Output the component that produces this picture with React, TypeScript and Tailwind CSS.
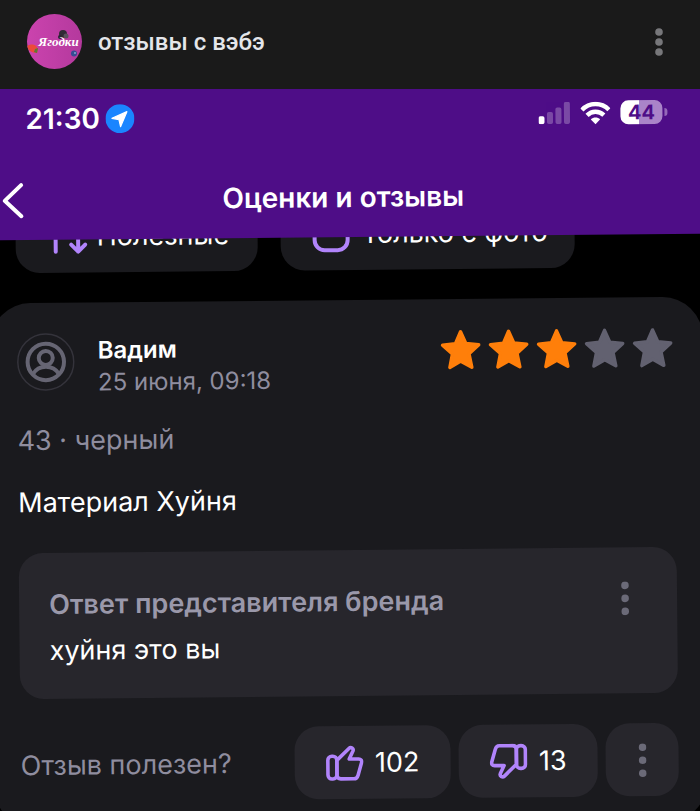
import type { ReactNode } from "react";

const RATING = 3;

export default function App() {
  return (
    <main className="flex h-screen flex-col overflow-hidden bg-black font-['Inter',sans-serif] text-white">
      <ChannelBar />
      <div className="min-h-0 flex-1 overflow-hidden">
        {/* the phone shot sits slightly tilted inside the post */}
        <div className="origin-top -rotate-[0.55deg]">
          <PhoneHeader />
          <Filters />
          <Review />
        </div>
      </div>
    </main>
  );
}

function ChannelBar() {
  return (
    <header className="relative z-20 flex h-[89px] shrink-0 items-center bg-[#1a1a1a] pb-1.5 pl-[27px] pr-[29px]">
      <ChannelLogo />
      <h1 className="ml-4 flex-1 font-['Roboto',sans-serif] text-2xl font-medium text-[#e4e6ea]">
        отзывы с вэбэ
      </h1>
      <button type="button" aria-label="Меню" className="px-2 text-[#77777a]">
        <Dots size="small" />
      </button>
    </header>
  );
}

function ChannelLogo() {
  return (
    <div className="relative flex size-[55px] items-center justify-center overflow-hidden rounded-full bg-linear-to-r from-[#cb43ae] to-[#b4399d]">
      <svg viewBox="0 0 55 55" className="absolute inset-0 size-full" aria-hidden="true">
        <path d="M0 32c3-2 7-2 9 0l2 3-1 4c-4 0-8-2-10-5z" fill="#ec4a3a" />
        <path d="M8 35l3-1-1 5-3-1z" fill="#5c7a35" />
        <circle cx="36" cy="20" r="4" fill="#302a35" />
        <circle cx="39" cy="22" r="2.500" fill="#5a505c" />
        <circle cx="33" cy="23" r="2" fill="#2b2430" />
        <circle cx="47" cy="39.500" r="3" fill="#354d93" />
        <circle cx="48" cy="39" r="1" fill="#8aa2cf" />
      </svg>
      <span className="relative ml-2 font-['Liberation_Serif',serif] text-[13px] font-bold italic">
        Ягодки
      </span>
    </div>
  );
}

function PhoneHeader() {
  return (
    <div className="relative z-10 -mx-5 -mt-5 bg-[#4e0d87] px-5 pt-5">
      <div className="flex h-[52px] items-center justify-between pl-[25px] pr-[33px]">
        <div className="flex items-center gap-[5px] pt-0.5">
          <span className="text-[28px] font-semibold leading-8">21:30</span>
          <LocationBadge />
        </div>
        <div className="flex items-center gap-2.5">
          <Signal />
          <Wifi />
          <Battery />
        </div>
      </div>
      <nav className="mt-4 grid h-20 grid-cols-[40px_1fr_56px] items-center">
        <button type="button" aria-label="Назад">
          <svg viewBox="0 0 24 38" className="h-[38px] w-6" fill="none" stroke="currentColor" strokeWidth="4" strokeLinecap="round" strokeLinejoin="round">
            <path d="M20 4L3.500 19.500 20 35" />
          </svg>
        </button>
        <h2 className="text-center text-[28px] font-semibold leading-8">Оценки и отзывы</h2>
      </nav>
    </div>
  );
}

function LocationBadge() {
  return (
    <svg viewBox="0 0 29 29" className="size-[29px]" aria-hidden="true">
      <circle cx="14.500" cy="14.500" r="14.500" fill="#1a85ff" />
      <path d="M21.500 7.500L15 22.500l-1.500-7-7-1.500z" fill="#fff" stroke="#fff" strokeWidth="1.200" strokeLinejoin="round" />
    </svg>
  );
}

function Signal() {
  return (
    <svg viewBox="0 0 32 22" className="h-[22px] w-8" fill="#fff" aria-hidden="true">
      <rect x="0" y="14" width="6" height="8" rx="1.800" />
      <g opacity="0.25">
        <rect x="8.500" y="10" width="6" height="12" rx="1.800" />
        <rect x="17" y="5.500" width="6" height="16.500" rx="1.800" />
        <rect x="25.500" y="0" width="6" height="22" rx="1.800" />
      </g>
    </svg>
  );
}

function Wifi() {
  return (
    <svg viewBox="0 0 30 23" className="h-[23px] w-[30px]" aria-hidden="true">
      <g fill="none" stroke="#fff" strokeWidth="4.400">
        <path d="M1.500 8.200C9 .400 21 .400 28.500 8.200" />
        <path d="M6.600 13.600c4.800-4.700 12-4.700 16.800 0" />
      </g>
      <path d="M15 22.500l-4.700-4.800c2.700-2.400 6.700-2.400 9.400 0z" fill="#fff" />
    </svg>
  );
}

function Battery() {
  return (
    <div className="flex items-center gap-0.5">
      <div className="flex h-6 w-[42px] items-center justify-center rounded-lg bg-linear-to-r from-white from-44% to-[#aa84c9] to-44% text-xl font-bold text-[#4e0d87]">
        44
      </div>
      <div className="h-2 w-[3px] rounded-r-full bg-[#9568b9]" />
    </div>
  );
}

function Filters() {
  return (
    <div className="-mt-10 flex gap-[23px] pl-3.5 text-[27px] leading-8">
      <button type="button" className="flex h-[73px] w-[242px] items-center rounded-3xl bg-[#1a1a1e] pl-9">
        <svg viewBox="0 0 38 36" className="h-9 w-[38px]" fill="none" stroke="#b184fb" strokeWidth="4" strokeLinecap="round" strokeLinejoin="round" aria-hidden="true">
          <path d="M4 33V5M26.500 5v28m-7-7l7 7 7-7" />
        </svg>
        <span className="ml-[7px]">Полезные</span>
      </button>
      <label className="flex h-[73px] w-[294px] items-center rounded-3xl bg-[#1a1a1e] pl-8">
        <input type="checkbox" className="size-[37px] appearance-none rounded-xl border-4 border-[#b184fb]" />
        <span className="ml-3">Только с фото</span>
      </label>
    </div>
  );
}

function Review() {
  return (
    <article className="-ml-3 mt-[30px] rounded-[40px] bg-[#1a1a1e] pb-[26px] pl-[26px] pr-7 pt-[30px]">
      <div className="flex items-start">
        <UserIcon />
        <div className="ml-[23px] flex-1 pt-0.5">
          <h3 className="text-2xl font-semibold leading-8">Вадим</h3>
          <time className="block text-2xl leading-8 text-[#8f8d9f]">25 июня, 09:18</time>
        </div>
        <div role="img" aria-label="3 из 5" className="mr-px flex gap-1.5">
          {[1, 2, 3, 4, 5].map((n) => (
            <Star key={n} filled={n <= RATING} />
          ))}
        </div>
      </div>

      <p className="mt-6 text-[27px] leading-9 text-[#8f8d9f]">43 · черный</p>
      <p className="mt-[26px] text-[27px] leading-9">Материал Хуйня</p>

      <section className="mt-8 flex h-[146px] items-start rounded-3xl bg-[#27262c] pl-[30px] pr-10 pt-[34px]">
        <div className="flex-1">
          <h4 className="text-[27px] font-semibold leading-9 text-[#9a98aa]">Ответ представителя бренда</h4>
          <p className="mt-2.5 text-[27px] leading-9">хуйня это вы</p>
        </div>
        <button type="button" aria-label="Действия с ответом" className="px-2 text-[#6b6a78]">
          <Dots />
        </button>
      </section>

      <div className="mt-[30px] flex items-center gap-2">
        <p className="flex-1 text-[27px] leading-9 text-[#8f8d9f]">Отзыв полезен?</p>
        <VoteButton label="Полезно" count={102} width="w-[156px]">
          <Thumb />
        </VoteButton>
        <VoteButton label="Не полезно" count={13} width="w-[139px]">
          <Thumb down />
        </VoteButton>
        <button
          type="button"
          aria-label="Ещё"
          className="flex size-[73px] items-center justify-center rounded-3xl bg-[#27262c] text-[#6b6a78]"
        >
          <Dots />
        </button>
      </div>
    </article>
  );
}

function UserIcon() {
  return (
    <svg viewBox="0 0 58 58" className="size-[58px]" fill="none" stroke="#666573" aria-hidden="true">
      <circle cx="29" cy="29" r="28" stroke="#34333b" strokeWidth="1.500" />
      <g strokeWidth="4">
        <circle cx="29" cy="29" r="18.200" />
        <circle cx="29" cy="25" r="7" />
        <path d="M16 41c6-9.500 20-9.500 26 0" />
      </g>
    </svg>
  );
}

function Star({ filled }: { filled: boolean }) {
  return (
    <svg
      viewBox="0 0 42 42"
      className={`size-[42px] ${filled ? "text-[#ff7f0a]" : "text-[#626170]"}`}
      fill="currentColor"
      stroke="currentColor"
      strokeWidth="3.400"
      strokeLinejoin="round"
      aria-hidden="true"
    >
      <path d="M21 2.800l5.200 11.800 12.900 1.400-9.800 8.900L32 38.400l-11-6.200-11 6.200 2.700-13.500-9.800-8.900 12.900-1.400z" />
    </svg>
  );
}

function VoteButton({
  label,
  count,
  width,
  children,
}: {
  label: string;
  count: number;
  width: string;
  children: ReactNode;
}) {
  return (
    <button
      type="button"
      aria-label={`${label}: ${count}`}
      className={`flex h-[73px] ${width} items-center justify-center gap-[11px] rounded-3xl bg-[#27262c] text-[27px] leading-9`}
    >
      {children}
      {count}
    </button>
  );
}

function Thumb({ down = false }: { down?: boolean }) {
  return (
    <svg
      viewBox="0 0 38 36"
      className={`h-9 w-[38px] ${down ? "rotate-180" : ""}`}
      fill="none"
      stroke="#b184fb"
      strokeWidth="3.600"
      strokeLinecap="round"
      strokeLinejoin="round"
      aria-hidden="true"
    >
      <rect x="2.200" y="11" width="9" height="22.800" rx="4" />
      <path d="M11.200 15.200L23.400 3.400c2-1.900 5 .2 4 2.600L23.600 14H33c2.400 0 3.500 1.600 2.900 3.700l-3.600 12.500c-.8 2.600-2 3.600-4.100 3.600H15.200c-2.400 0-4-1.400-4-3.600z" />
    </svg>
  );
}

function Dots({ size = "normal" }: { size?: "small" | "normal" }) {
  return (
    <svg
      viewBox={size === "small" ? "0 0 8 28" : "0 0 8 34"}
      className={size === "small" ? "h-7 w-2" : "h-[34px] w-2"}
      fill="currentColor"
      aria-hidden="true"
    >
      <circle cx="4" cy="4" r="3.800" />
      <circle cx="4" cy={size === "small" ? 14 : 17} r="3.800" />
      <circle cx="4" cy={size === "small" ? 24 : 30} r="3.800" />
    </svg>
  );
}
